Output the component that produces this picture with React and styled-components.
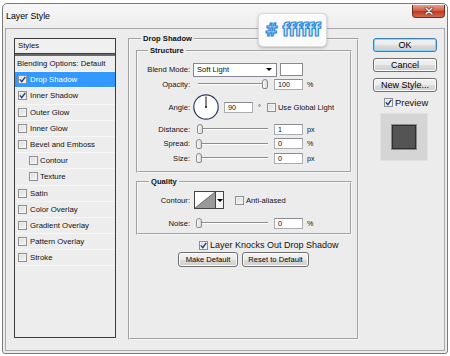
import React from "react";
import styled, { createGlobalStyle } from "styled-components";

const GlobalStyle = createGlobalStyle`
  html, body { margin: 0; padding: 0; background: #fff; }
  body {
    font-family: "Liberation Sans", Arial, sans-serif;
    font-size: 7.6px;
    color: #111;
  }
  * { box-sizing: border-box; }
`;

const Window = styled.div`
  position: relative;
  margin: 3px 0 0 2px;
  width: 446px;
  height: 351px;
  border: 1px solid #7b7b7b;
  border-radius: 5px 5px 3px 3px;
  background: linear-gradient(#f7f7f7, #ececec 26px);
  display: flex;
  flex-direction: column;
  padding: 0 2px 3px 2px;
`;

const TitleBar = styled.div`
  height: 24px;
  flex-shrink: 0;
  display: flex;
  justify-content: space-between;
  align-items: flex-start;
`;

const Title = styled.span`
  padding-left: 1px;
  line-height: 24px;
  font-size: 8.8px;
  color: #000;
`;

const CloseButton = styled.div`
  margin-top: 1px;
  width: 33px;
  height: 13px;
  border: 1px solid #7a2c1e;
  border-top: none;
  border-radius: 0 0 4px 4px;
  background: linear-gradient(#eaa08e, #d2604a 45%, #ba3a20 55%, #d06c50);
  display: flex;
  align-items: center;
  justify-content: center;
`;

const Client = styled.div`
  flex: 1;
  border: 1px solid #a9a9a9;
  background: #ececec;
  display: flex;
  align-items: flex-start;
  padding: 9px 8px 10px 8px;
`;

const StylesList = styled.div`
  width: 102px;
  height: 300px;
  flex-shrink: 0;
  border: 1px solid #3c3c3c;
  background: #ededed;
`;

const ListHeader = styled.div`
  height: 14px;
  line-height: 14px;
  padding-left: 3px;
  background: #f0f0f0;
  font-size: 7.8px;
`;

const ListDivider = styled.div`
  height: 3px;
  background: #6a6a6a;
  border-top: 1px solid #3e3e3e;
`;

const ListRow = styled.div`
  height: 16.2px;
  display: flex;
  align-items: center;
  gap: ${p => (p.$sub ? 2 : 3)}px;
  padding-left: ${p => (p.$sub ? 14 : p.$plain ? 2 : 3)}px;
  border-bottom: 1px solid #f7f7f7;
  font-size: 7.8px;
  background: ${p => (p.$selected ? "#3399ff" : "transparent")};
  color: ${p => (p.$selected ? "#fff" : "#111")};
`;

const Box = styled.span`
  display: inline-flex;
  align-items: center;
  justify-content: center;
  width: 9px;
  height: 9px;
  flex-shrink: 0;
  border: 1px solid #8e8f8f;
  background: linear-gradient(135deg, #d6d6d6, #fbfbfb);
  box-shadow: inset 0 0 0 1px #f2f2f2;
`;

const Checkbox = ({ checked }) => (
  <Box>
    {checked && (
      <svg width="7" height="7" viewBox="0 0 7 7">
        <path d="M0.8 3.4 L2.8 5.6 L6.3 0.8" stroke="#1d3c84" strokeWidth="1.4" fill="none" />
      </svg>
    )}
  </Box>
);

const Group = styled.fieldset`
  margin: ${p => p.$margin || "0"};
  padding: ${p => p.$pad || "0"};
  min-width: 0;
  width: ${p => (p.$width ? `${p.$width}px` : "auto")};
  height: ${p => (p.$height ? `${p.$height}px` : "auto")};
  border: 2px groove #f6f6f6;
  flex-shrink: 0;
`;

const Legend = styled.legend`
  margin-left: ${p => p.$indent}px;
  padding: 0 2px;
  font-weight: bold;
  font-size: 7.6px;
  line-height: 9px;
`;

const Row = styled.div`
  display: flex;
  align-items: center;
  height: ${p => p.$h}px;
  margin-top: ${p => p.$mt || 0}px;
  margin-left: ${p => p.$ml || 0}px;
`;

const Label = styled.span`
  width: 52px;
  flex-shrink: 0;
  text-align: right;
`;

const Select = styled.div`
  margin-left: 3px;
  width: 84px;
  height: 14px;
  border: 1px solid #828790;
  background: #fff;
  display: flex;
  align-items: center;
  justify-content: space-between;
  padding: 0 4px 0 3px;
`;

const Arrow = styled.span`
  width: 0;
  height: 0;
  border-left: 3px solid transparent;
  border-right: 3px solid transparent;
  border-top: 3px solid #000;
`;

const Swatch = styled.div`
  margin-left: 3px;
  width: 23px;
  height: 13px;
  border: 1px solid #8a8a8a;
  background: #fff;
`;

const Track = styled.div`
  position: relative;
  margin-left: 6px;
  width: 72px;
  height: 12px;
  flex-shrink: 0;
  &::before {
    content: "";
    position: absolute;
    left: 2px;
    right: 0;
    top: 5px;
    height: 1px;
    background: #8d8d8d;
    box-shadow: 0 1px 0 #fff;
  }
`;

const Thumb = styled.span`
  position: absolute;
  top: 1px;
  width: 6px;
  height: 10px;
  border: 1px solid #8a8a8a;
  border-radius: 3px 3px 2px 2px;
  background: linear-gradient(90deg, #fdfdfd, #d8d8d8);
`;

const Slider = ({ value }) => (
  <Track>
    <Thumb style={{ left: `${(value / 100) * 66}px` }} />
  </Track>
);

const Input = styled.div`
  margin-left: ${p => p.$ml ?? 6}px;
  width: 29px;
  height: 11px;
  flex-shrink: 0;
  border: 1px solid #abadb3;
  border-top-color: #8a8c92;
  background: #fff;
  padding-left: 3px;
  line-height: 9px;
  font-size: 7.2px;
`;

const Unit = styled.span`
  margin-left: ${p => p.$ml ?? 4}px;
  font-size: 7.2px;
`;

const Dial = styled.svg`
  margin-left: 3px;
  flex-shrink: 0;
`;

const ContourBox = styled.div`
  margin-left: 4px;
  width: 30px;
  height: 18px;
  border: 1px solid #444;
  background: #fff;
  display: flex;
  flex-shrink: 0;
`;

const ContourArrow = styled.div`
  width: 8px;
  border-left: 1px solid #444;
  display: flex;
  align-items: center;
  justify-content: center;
  background: #f4f4f4;
`;

const CheckLabel = styled.div`
  display: flex;
  align-items: center;
  gap: ${p => p.$gap || 2}px;
  margin-left: ${p => p.$ml || 0}px;
  margin-top: ${p => p.$mt || 0}px;
  height: ${p => (p.$h ? `${p.$h}px` : "auto")};
  font-size: ${p => p.$size || 7.6}px;
`;

const ButtonRow = styled.div`
  display: flex;
  gap: 4px;
  margin: 2px 0 0 42px;
`;

const Button = styled.div`
  width: ${p => p.$w}px;
  height: ${p => p.$h || 15}px;
  margin-top: ${p => p.$mt || 0}px;
  display: flex;
  align-items: center;
  justify-content: center;
  font-size: ${p => p.$size || 7.6}px;
  border: 1px solid ${p => (p.$default ? "#3c7fb1" : "#707070")};
  border-radius: 3px;
  background: linear-gradient(#f2f2f2, #ebebeb 50%, #dddddd 51%, #cfcfcf);
  box-shadow: ${p => (p.$default ? "inset 0 0 0 1px #8fd3f5" : "inset 0 0 0 1px #fcfcfc")};
  color: #000;
`;

const SideColumn = styled.div`
  margin-left: 14px;
  width: 64px;
  flex-shrink: 0;
  display: flex;
  flex-direction: column;
`;

const PreviewBox = styled.div`
  margin: 5px 0 0 7px;
  width: 48px;
  height: 48px;
  background: #d5d5d5;
  border: 1px solid #e2e2e2;
  display: flex;
  align-items: center;
  justify-content: center;
`;

const PreviewSquare = styled.div`
  width: 24px;
  height: 24px;
  background: #545454;
  border: 1px solid #2f2f2f;
  box-shadow: 0 0 0 1px #8a8a8a;
`;

const ColorBadge = styled.div`
  position: absolute;
  left: 255px;
  top: 9px;
  width: 69px;
  height: 34px;
  border-radius: 5px;
  background: #fbfbfb;
  border: 1px solid #dadada;
  box-shadow: 0 1px 3px rgba(0, 0, 0, 0.25);
  display: flex;
  align-items: center;
  justify-content: center;
  font-family: "DejaVu Sans Condensed", "DejaVu Sans", sans-serif;
  font-stretch: condensed;
  font-weight: bold;
  font-size: 17.5px;
  letter-spacing: -0.6px;
  color: #d8efff;
  -webkit-text-stroke: 1.2px #2f87d8;
  text-shadow: 0 0 2px rgba(47, 135, 216, 0.35);
`;

const styleItems = [
  { label: "Drop Shadow", checked: true, selected: true },
  { label: "Inner Shadow", checked: true },
  { label: "Outer Glow" },
  { label: "Inner Glow" },
  { label: "Bevel and Emboss" },
  { label: "Contour", sub: true },
  { label: "Texture", sub: true },
  { label: "Satin" },
  { label: "Color Overlay" },
  { label: "Gradient Overlay" },
  { label: "Pattern Overlay" },
  { label: "Stroke" },
];

const SliderRow = ({ label, value, unit, mt, h = 12 }) => (
  <Row $h={h} $mt={mt}>
    <Label>{label}</Label>
    <Slider value={value} />
    <Input>{value}</Input>
    <Unit>{unit}</Unit>
  </Row>
);

export default function App() {
  return (
    <>
      <GlobalStyle />
      <Window>
        <TitleBar>
          <Title>Layer Style</Title>
          <CloseButton>
            <svg width="10" height="8" viewBox="0 0 10 8">
              <path d="M2 1 L8 7 M8 1 L2 7" stroke="#5a1e12" strokeWidth="2.6" strokeLinecap="round" />
              <path d="M2 1 L8 7 M8 1 L2 7" stroke="#fff" strokeWidth="1.5" strokeLinecap="round" />
            </svg>
          </CloseButton>
        </TitleBar>
        <Client>
          <StylesList>
            <ListHeader>Styles</ListHeader>
            <ListDivider />
            <ListRow $plain>Blending Options: Default</ListRow>
            {styleItems.map(item => (
              <ListRow key={item.label} $sub={item.sub} $selected={item.selected}>
                <Checkbox checked={item.checked} />
                {item.label}
              </ListRow>
            ))}
          </StylesList>

          <Group $width={231} $height={306} $margin="-4px 0 0 12px" $pad="0 5px 0 6px">
            <Legend $indent={5}>Drop Shadow</Legend>
            <Group $margin="3px 0 0 0" $pad="7px 0 7px 0">
              <Legend $indent={10}>Structure</Legend>
              <Row $h={15}>
                <Label>Blend Mode:</Label>
                <Select>
                  Soft Light
                  <Arrow />
                </Select>
                <Swatch />
              </Row>
              <SliderRow label="Opacity:" value={100} unit="%" mt={1} />
              <Row $h={26} $mt={4}>
                <Label>Angle:</Label>
                <Dial width="26" height="26" viewBox="0 0 26 26">
                  <circle cx="13" cy="13" r="12.2" fill="#fff" stroke="#2c3b63" strokeWidth="1.2" />
                  <line x1="13" y1="13" x2="13" y2="2.5" stroke="#111" strokeWidth="1" />
                  <circle cx="13" cy="13" r="1" fill="#111" />
                </Dial>
                <Input $ml={5}>90</Input>
                <Unit $ml={5}>°</Unit>
                <CheckLabel $ml={6}>
                  <Checkbox />
                  Use Global Light
                </CheckLabel>
              </Row>
              <SliderRow label="Distance:" value={1} unit="px" mt={3} />
              <SliderRow label="Spread:" value={0} unit="%" mt={2.5} />
              <SliderRow label="Size:" value={0} unit="px" mt={2.5} />
            </Group>

            <Group $margin="4px 0 0 0" $pad="5px 0 4px 0">
              <Legend $indent={11}>Quality</Legend>
              <Row $h={18}>
                <Label>Contour:</Label>
                <ContourBox>
                  <svg width="20" height="16" viewBox="0 0 20 16">
                    <polygon points="0,16 20,0 20,16" fill="#9a9a9a" />
                    <line x1="0" y1="16" x2="20" y2="0" stroke="#555" strokeWidth="0.8" />
                  </svg>
                  <ContourArrow>
                    <Arrow />
                  </ContourArrow>
                </ContourBox>
                <CheckLabel $ml={11}>
                  <Checkbox />
                  Anti-aliased
                </CheckLabel>
              </Row>
              <SliderRow label="Noise:" value={0} unit="%" mt={8} />
            </Group>

            <Row $h={10} $mt={5} $ml={63}>
              <CheckLabel $size={9}>
                <Checkbox checked />
                Layer Knocks Out Drop Shadow
              </CheckLabel>
            </Row>
            <ButtonRow>
              <Button $w={60}>Make Default</Button>
              <Button $w={67}>Reset to Default</Button>
            </ButtonRow>
          </Group>

          <SideColumn>
            <Button $w={64} $h={14} $size={9} $default>OK</Button>
            <Button $w={64} $h={14} $size={9} $mt={6}>Cancel</Button>
            <Button $w={64} $h={14} $size={9} $mt={6}>New Style...</Button>
            <CheckLabel $ml={11} $gap={2} $size={9.4} $mt={5} $h={11}>
              <Checkbox checked />
              Preview
            </CheckLabel>
            <PreviewBox>
              <PreviewSquare />
            </PreviewBox>
          </SideColumn>
        </Client>
        <ColorBadge># ffffff</ColorBadge>
      </Window>
    </>
  );
}
